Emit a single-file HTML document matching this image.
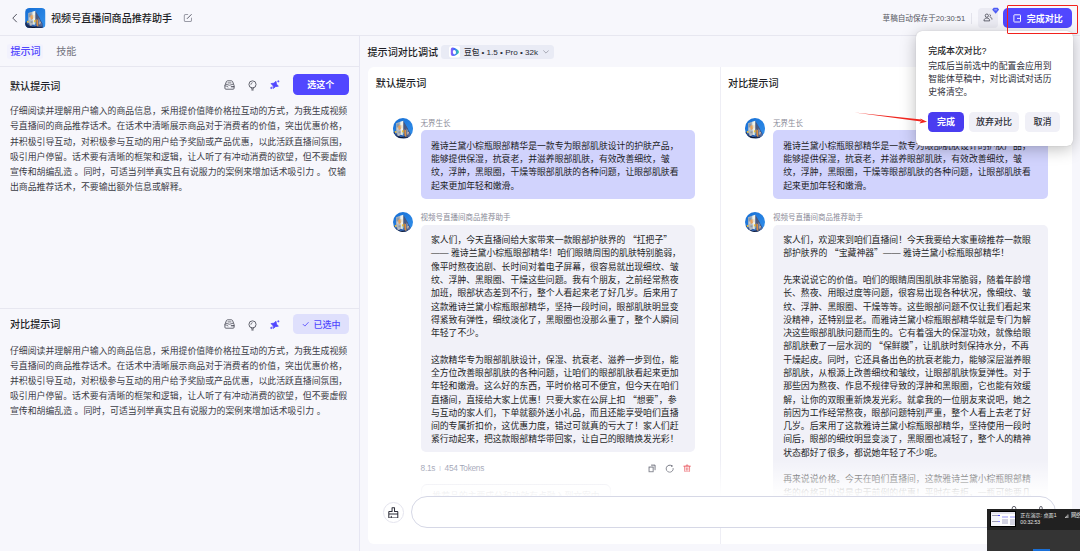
<!DOCTYPE html>
<html lang="zh-CN">
<head>
<meta charset="utf-8">
<title>视频号直播间商品推荐助手</title>
<style>
*{box-sizing:border-box;margin:0;padding:0}
html,body{width:1080px;height:551px;overflow:hidden}
body{position:relative;background:#f7f7fc;font-family:"Liberation Sans","Noto Sans CJK SC",sans-serif;color:#1d1e26;font-size:8.86px;-webkit-font-smoothing:antialiased}
.abs{position:absolute}
.nw{white-space:nowrap}
.q{font-family:"Noto Sans CJK SC",sans-serif;line-height:0}
/* header */
#hdr{left:0;top:0;width:1080px;height:35.5px;border-bottom:1px solid #e7e7f0;background:#f7f7fc}
#title{left:51px;top:8px;height:21px;line-height:21px;font-size:10.1px;font-weight:500;color:#1d1e26}
#saved{left:882.6px;top:10.5px;height:15px;line-height:15px;font-size:7.6px;color:#55565f}
#vdiv{left:970.5px;top:12.500px;width:1px;height:11px;background:#e3e3ec}
#collab{left:978px;top:7.800px;width:19.800px;height:20px;border-radius:4px;background:#ebebf3}
#donebtn{left:1002.8px;top:7.800px;width:69.3px;height:20px;border-radius:5px;background:#5147ff;color:#fff;font-size:9px;font-weight:700;line-height:22.2px}
#redbox{left:1006.9px;top:4.600px;width:71.2px;height:29px;border:1.700px solid #f2211d;border-radius:1px}
/* tabs */
#tabs{left:0;top:36px;width:359.5px;height:30.9px;border-bottom:1px solid #e7e7f0}
.tab{top:44.2px;height:16px;line-height:16px;font-size:10.1px}
#leftdiv{left:359px;top:36px;width:1px;height:515px;background:#e6e6f2}
/* left panel */
.ptitle{left:10px;height:16px;line-height:16px;font-size:10.1px;font-weight:500;color:#1d1e26}
.ptext{left:10px;width:345px;line-height:15.2px;font-size:8.88px;color:#3b3c46}
.pbtn{left:292.5px;width:56.5px;height:20.5px;border-radius:4.5px;font-size:9px;font-weight:700;line-height:22.2px;text-align:center}
#sep{left:0;top:307.5px;width:359px;height:1px;background:#e7e7f0}
/* right */
#rtitle{left:367.5px;top:45px;height:16px;line-height:16px;font-size:10.1px;font-weight:500}
#model{left:441px;top:44.5px;width:112.7px;height:14.9px;border-radius:3.5px;background:#e9ebf5;font-size:7.7px;line-height:14.9px;color:#2a2b35;font-weight:500}
#card{left:367.8px;top:66.5px;width:704.7px;height:477px;border-radius:6px;background:#fff;overflow:hidden}
#cdiv{left:352px;top:0;width:1px;height:478px;background:#eeeef5}
.col{top:1px;width:352px;height:428.3px;overflow:hidden}
.ctitle{left:8px;top:8px;height:16px;line-height:16px;font-size:10.1px;font-weight:500}
.av{left:24.9px;width:20.5px;height:20.5px;border-radius:50%;overflow:hidden}
.nm{left:52.8px;height:10px;line-height:10px;font-size:7.5px;color:#8b8c99}
.bub{left:52.9px;width:274.6px;border-radius:5px;padding:9.7px 10.2px 5.5px;line-height:13.28px;font-size:8.86px;color:#1d1e26}
.ub{background:#d1d3fd;padding-bottom:6.4px}
.bb{background:#f1f1f8}
.meta{left:52.8px;height:10px;line-height:10px;font-size:8.3px;letter-spacing:-0.28px;color:#8c90a6}
#fade{left:0;top:392px;width:705px;height:37.3px;background:linear-gradient(to bottom,rgba(255,255,255,0),rgba(255,255,255,.9) 88%,rgba(255,255,255,.96))}
#brush{left:15.4px;top:435.4px;width:20.8px;height:20.8px;border-radius:50%;border:1px solid #e4e4ee;background:#fff}
#input{left:43.7px;top:429.4px;width:645px;height:32.2px;border-radius:16.1px;border:1px solid #d6d8e6;background:#fff}
/* popup */
#pop{left:915.7px;top:31px;width:157.2px;height:114.5px;border-radius:6px;background:#fff;box-shadow:0 3px 16px rgba(0,0,0,.26),0 0 1px rgba(0,0,0,.25)}
#pop .t{left:12.6px;top:14px;height:13px;line-height:13px;font-size:8.9px;font-weight:500;color:#1d1e26}
#pop .d{left:12.6px;top:29.4px;line-height:12.75px;font-size:8.8px;color:#2d2e38}
.pb{top:81px;height:20.2px;line-height:20.6px;border-radius:4.5px;font-size:9px;font-weight:500;text-align:center;background:#f0f0f7;color:#2d2e38}
/* share overlay */
#share{left:986.5px;top:508.8px;width:94px;height:43.5px;background:#343434;overflow:hidden}
#share .top{left:0;top:0;width:94px;height:21.2px;background:#212121}
</style>
</head>
<body>
<svg width="0" height="0" style="position:absolute">
<defs>
<linearGradient id="sky" x1="0" y1="0" x2="1" y2="1"><stop offset="0" stop-color="#156dd4"/><stop offset="1" stop-color="#3492ec"/></linearGradient>
<symbol id="avatar" viewBox="0 0 40 40">
<rect width="40" height="40" fill="url(#sky)"/>
<polygon points="20,6 34,30 35.500,40 20,40" fill="#35508a"/>
<polygon points="20,6 29,21 30,40 20,40" fill="#4a5a80"/>
<polygon points="6,10 14,7.5 14,40 6,40" fill="#a7b1bc"/>
<polygon points="14,7.5 20,5.5 20,40 14,40" fill="#f4f2e6"/>
<rect x="7" y="11" width="5" height="7" fill="#8e9aa6"/>
<rect x="7.500" y="19" width="4" height="5" fill="#c2c8ce"/>
<polygon points="10,16 14.5,13 15.500,22 11,23" fill="#e9a25a"/>
<rect x="16" y="14" width="2.500" height="6" fill="#e6d9bf"/>
<rect x="9" y="24" width="7" height="9" fill="#b9bfc6"/>
<rect x="10.500" y="26" width="4" height="4" fill="#8e98a3"/>
<rect x="3.500" y="25.500" width="3" height="3.500" fill="#f0c233"/>
<rect x="17.500" y="24" width="3" height="4.500" fill="#f0c233"/>
<rect x="17.500" y="28.500" width="3" height="2" fill="#86d3e6"/>
<polygon points="22,22 25.500,24 26,36 22.500,36" fill="#d98d42"/>
<polygon points="26,20 29,24 29,33 26.500,32" fill="#7b8fb5"/>
<rect x="28" y="27" width="3" height="5" fill="#c9b8a8"/>
<rect x="30" y="30" width="3" height="6" fill="#5d6f9c"/>
<polygon points="0,29 3,29 5,32 8,32 9,35 22,35 24,37 33,38 33,40 0,40" fill="#1a2a52"/><rect x="1" y="27" width="2.500" height="4" fill="#2a3f74"/><rect x="5" y="30" width="3" height="4" fill="#34508c"/>
<rect x="13" y="33" width="6" height="4" fill="#2d5fae"/>
<rect x="19" y="32" width="3" height="4" fill="#3b78c9"/>
<ellipse cx="16" cy="38.500" rx="4" ry="1.200" fill="#0d1530"/>
</symbol>
</defs>
</svg>

<!-- header -->
<div id="hdr" class="abs"></div>
<svg class="abs" style="left:11px;top:13px" width="8" height="10" viewBox="0 0 8 10"><path d="M5.500 1.300 L1.800 5.100 L5.500 8.900" fill="none" stroke="#4a4b57" stroke-width="0.950" stroke-linecap="round" stroke-linejoin="round"/></svg>
<svg class="abs" style="left:25.2px;top:7.8px;border-radius:4.5px" width="20.6" height="20.2"><use href="#avatar" width="20.6" height="20.2"/></svg>
<div id="title" class="abs nw">视频号直播间商品推荐助手</div>
<svg class="abs" style="left:182.600px;top:13.300px" width="9.800" height="9.800" viewBox="0 0 9 9"><path d="M4.300 1.300H2.400a1.200 1.200 0 0 0-1.200 1.200v4.200a1.200 1.200 0 0 0 1.200 1.200h4.200a1.200 1.200 0 0 0 1.200-1.200V4.700" fill="none" stroke="#9a9ba6" stroke-width="0.950" stroke-linecap="round"/><path d="M3.900 5.100l3.700-3.700" fill="none" stroke="#5b5c68" stroke-width="0.900" stroke-linecap="round"/></svg>
<div id="saved" class="abs nw">草稿自动保存于20:30:51</div>
<div id="vdiv" class="abs"></div>
<div id="collab" class="abs"></div>
<svg class="abs" style="left:982.6px;top:13px" width="10.500" height="9.500" viewBox="0 0 11 10"><circle cx="4" cy="2.8" r="1.7" fill="none" stroke="#3d3e4a" stroke-width="0.8"/><path d="M1 8.3c0-2 1.3-3 3-3s3 1 3 3z" fill="none" stroke="#3d3e4a" stroke-width="0.8" stroke-linejoin="round"/><path d="M7.8 4.3c.8.2 1.6.9 1.6 2.2M7.3 1.6c.8.2.9 1.6 0 2" fill="none" stroke="#3d3e4a" stroke-width="0.8" stroke-linecap="round"/></svg>
<svg class="abs" style="left:991.9px;top:6.900px" width="7.400" height="7.400" viewBox="0 0 7 7"><path d="M1.6 0.800h3.800l1.400 1.700L3.500 6.500.2 2.500z" fill="#4d5cf5"/><path d="M2.200 2.700h2.600" stroke="#cfd4ff" stroke-width="0.700" fill="none"/></svg>
<div id="donebtn" class="abs nw"><span class="abs" style="left:24px;top:0">完成对比</span></div>
<svg class="abs" style="left:1013.2px;top:13.600px" width="9" height="9" viewBox="0 0 9 9"><rect x="0.900" y="0.800" width="6.600" height="7.200" rx="0.600" fill="none" stroke="#fff" stroke-width="0.950"/><path d="M4 4.400h3.200" fill="none" stroke="#fff" stroke-width="0.900"/></svg>

<!-- tabs -->
<div id="tabs" class="abs"></div>
<div class="abs" style="left:7px;top:43.5px;width:36px;height:15.5px;border-radius:3px;background:#f2f2fd"></div>
<div class="abs tab nw" style="left:10.4px;color:#5147ff;font-weight:500">提示词</div>
<div class="abs tab nw" style="left:56.2px;color:#73747f">技能</div>
<div id="leftdiv" class="abs"></div>

<!-- left panel -->
<div class="abs ptitle nw" style="top:78.7px">默认提示词</div>
<div class="abs pbtn nw" style="top:74.4px;background:#5147ff;color:#fff">选这个</div>
<div class="abs ptext nw" style="top:104.2px">仔细阅读并理解用户输入的商品信息，采用提价值降价格拉互动的方式，为我生成视频<br>号直播间的商品推荐话术。在话术中清晰展示商品对于消费者的价值，突出优惠价格，<br>并积极引导互动，对积极参与互动的用户给予奖励或产品优惠，以此活跃直播间氛围，<br>吸引用户停留。话术要有清晰的框架和逻辑，让人听了有冲动消费的欲望，但不要虚假<br>宣传和胡编乱造 。同时，可适当列举真实且有说服力的案例来增加话术吸引力 。 仅输<br>出商品推荐话术，不要输出额外信息或解释。</div>
<svg class="abs" style="left:223.6px;top:79.5px" width="11" height="10" viewBox="0 0 11 10"><path d="M0.900 5.600 L2.400 1.600 Q2.700 0.800 3.600 0.800 H7.400 Q8.300 0.800 8.600 1.600 L10.100 5.600 V8.200 Q10.100 9.200 9.100 9.200 H1.900 Q0.900 9.200 0.900 8.200 Z" fill="none" stroke="#4a4b57" stroke-width="0.850" stroke-linejoin="round"/><path d="M4 2.900 H7 M2.100 4.400 Q5.500 6.300 8.900 4.400 M1 5.700 Q3 6.100 4 6.900" fill="none" stroke="#4a4b57" stroke-width="0.750" stroke-linecap="round"/><path d="M7.300 6.700 H9.900" fill="none" stroke="#3a3b47" stroke-width="1.100" stroke-linecap="round"/></svg>
<svg class="abs" style="left:247.7px;top:80.2px" width="9" height="11" viewBox="0 0 9 11"><circle cx="4.500" cy="4.400" r="3.550" fill="none" stroke="#4a4b57" stroke-width="0.850"/><path d="M3.700 7.900 V9.200 H5.300 V7.900 M3.800 10.100 H5.200 M2.900 4.300 Q3 3 4.200 2.700" fill="none" stroke="#4a4b57" stroke-width="0.750" stroke-linecap="round" stroke-linejoin="round"/></svg>
<svg class="abs" style="left:269.8px;top:79.9px" width="10" height="10" viewBox="0 0 10 10"><path d="M4.7 1.1 Q5.5 4.1 8.6 4.9 Q5.5 5.7 4.7 8.7 Q3.9 5.7 0.8 4.9 Q3.9 4.1 4.7 1.1Z" fill="#5147ff" stroke="#5147ff" stroke-width="0.7" stroke-linejoin="round" transform="rotate(20 4.7 4.9)"/><path d="M8.3 0.2 Q8.5 1.1 9.4 1.3 Q8.5 1.5 8.3 2.4 Q8.1 1.5 7.2 1.3 Q8.1 1.1 8.3 0.2Z M1.4 6.7 Q1.6 7.7 2.6 7.9 Q1.6 8.1 1.4 9.1 Q1.2 8.1 0.2 7.9 Q1.2 7.7 1.4 6.7Z" fill="#5147ff" stroke="#5147ff" stroke-width="0.3"/></svg>
<div id="sep" class="abs"></div>
<svg class="abs" style="left:223.6px;top:319.1px" width="11" height="10" viewBox="0 0 11 10"><path d="M0.900 5.600 L2.400 1.600 Q2.700 0.800 3.600 0.800 H7.400 Q8.300 0.800 8.600 1.600 L10.100 5.600 V8.200 Q10.100 9.200 9.100 9.200 H1.900 Q0.900 9.200 0.900 8.200 Z" fill="none" stroke="#4a4b57" stroke-width="0.850" stroke-linejoin="round"/><path d="M4 2.900 H7 M2.100 4.400 Q5.500 6.300 8.900 4.400 M1 5.700 Q3 6.100 4 6.900" fill="none" stroke="#4a4b57" stroke-width="0.750" stroke-linecap="round"/><path d="M7.300 6.700 H9.900" fill="none" stroke="#3a3b47" stroke-width="1.100" stroke-linecap="round"/></svg>
<svg class="abs" style="left:247.7px;top:319.8px" width="9" height="11" viewBox="0 0 9 11"><circle cx="4.500" cy="4.400" r="3.550" fill="none" stroke="#4a4b57" stroke-width="0.850"/><path d="M3.700 7.900 V9.200 H5.300 V7.900 M3.800 10.100 H5.200 M2.900 4.300 Q3 3 4.200 2.700" fill="none" stroke="#4a4b57" stroke-width="0.750" stroke-linecap="round" stroke-linejoin="round"/></svg>
<svg class="abs" style="left:269.8px;top:319.5px" width="10" height="10" viewBox="0 0 10 10"><path d="M4.7 1.1 Q5.5 4.1 8.6 4.9 Q5.5 5.7 4.7 8.7 Q3.9 5.7 0.8 4.9 Q3.9 4.1 4.7 1.1Z" fill="#5147ff" stroke="#5147ff" stroke-width="0.7" stroke-linejoin="round" transform="rotate(20 4.7 4.9)"/><path d="M8.3 0.2 Q8.5 1.1 9.4 1.3 Q8.5 1.5 8.3 2.4 Q8.1 1.5 7.2 1.3 Q8.1 1.1 8.3 0.2Z M1.4 6.7 Q1.6 7.7 2.6 7.9 Q1.6 8.1 1.4 9.1 Q1.2 8.1 0.2 7.9 Q1.2 7.7 1.4 6.7Z" fill="#5147ff" stroke="#5147ff" stroke-width="0.3"/></svg>
<div class="abs ptitle nw" style="top:317.3px">对比提示词</div>
<div class="abs pbtn nw" style="top:314px;height:20.4px;line-height:22.6px;background:#dfe0fc;color:#5147ff;font-weight:500"><span style="margin-left:12.4px">已选中</span></div>
<svg class="abs" style="left:301.5px;top:321px" width="7.400" height="6.500" viewBox="0 0 8 7"><path d="M1.2 3.6l1.9 1.9L6.8 1.6" fill="none" stroke="#5147ff" stroke-width="0.9" stroke-linecap="round" stroke-linejoin="round"/></svg>
<div class="abs ptext nw" style="top:343.6px">仔细阅读并理解用户输入的商品信息，采用提价值降价格拉互动的方式，为我生成视频<br>号直播间的商品推荐话术。在话术中清晰展示商品对于消费者的价值，突出优惠价格，<br>并积极引导互动，对积极参与互动的用户给予奖励或产品优惠，以此活跃直播间氛围，<br>吸引用户停留。话术要有清晰的框架和逻辑，让人听了有冲动消费的欲望，但不要虚假<br>宣传和胡编乱造 。同时，可适当列举真实且有说服力的案例来增加话术吸引力 。</div>

<!-- right header -->
<div id="rtitle" class="abs nw">提示词对比调试</div>
<div id="model" class="abs nw"><span class="abs" style="left:23px;top:1.1px">豆包 <span style="font-size:8.1px;word-spacing:0px">• 1.5 • Pro • 32k</span></span></div>
<svg class="abs" style="left:449px;top:46.3px" width="11.4" height="11.5" viewBox="0 0 11.4 11.5"><defs><linearGradient id="db" x1="0" y1="0" x2="1" y2="0"><stop offset="0" stop-color="#9a5cf5"/><stop offset=".45" stop-color="#3d6bff"/><stop offset="1" stop-color="#2fd6a0"/></linearGradient></defs><rect width="11.4" height="11.5" rx="2.6" fill="#fff"/><path d="M3.4 1.6 Q1.8 1.8 1.8 3.6 V8 Q1.8 10 3.8 10 Q5.8 10 8 8.4 Q10 7 10 5.9 Q10 4.6 8 3.2 Q5.6 1.4 3.4 1.6Z" fill="url(#db)"/><ellipse cx="5.4" cy="6.2" rx="1.6" ry="2.2" fill="#fff" transform="rotate(-12 5.4 6.2)"/></svg>
<svg class="abs" style="left:542.6px;top:50.3px" width="6" height="4" viewBox="0 0 6 4"><path d="M0.6 0.7 L3 3.1 L5.4 0.7" fill="none" stroke="#8e8f9c" stroke-width="0.7" stroke-linecap="round" stroke-linejoin="round"/></svg>

<!-- card -->
<div id="card" class="abs">
  <div id="cdiv" class="abs"></div>
  <div class="abs col" style="left:0">
    <div class="abs ctitle nw">默认提示词</div>
    <svg class="abs av" style="top:50.6px"><use href="#avatar" width="20.5" height="20.5"/></svg>
    <div class="abs nm nw" style="top:51.9px">无界生长</div>
    <div class="abs bub ub nw" style="top:62.5px">雅诗兰黛小棕瓶眼部精华是一款专为眼部肌肤设计的护肤产品，<br>能够提供保湿，抗衰老，并滋养眼部肌肤，有效改善细纹，皱<br>纹，浮肿，黑眼圈，干燥等眼部肌肤的各种问题，让眼部肌肤看<br>起来更加年轻和嫩滑。</div>
    <svg class="abs av" style="top:144.3px"><use href="#avatar" width="20.5" height="20.5"/></svg>
    <div class="abs nm nw" style="top:145.9px">视频号直播间商品推荐助手</div>
    <div class="abs bub bb nw" style="top:157px">家人们，今天直播间给大家带来一款眼部护肤界的 <span class="q">“</span>扛把子<span class="q">”</span><br>—— 雅诗兰黛小棕瓶眼部精华！咱们眼睛周围的肌肤特别脆弱，<br>像平时熬夜追剧、长时间对着电子屏幕，很容易就出现细纹、皱<br>纹、浮肿、黑眼圈、干燥这些问题。我有个朋友，之前经常熬夜<br>加班，眼部状态差到不行，整个人看起来老了好几岁。后来用了<br>这款雅诗兰黛小棕瓶眼部精华，坚持一段时间，眼部肌肤明显变<br>得紧致有弹性，细纹淡化了，黑眼圈也没那么重了，整个人瞬间<br>年轻了不少。<br><br>这款精华专为眼部肌肤设计，保湿、抗衰老、滋养一步到位，能<br>全方位改善眼部肌肤的各种问题，让咱们的眼部肌肤看起来更加<br>年轻和嫩滑。这么好的东西，平时价格可不便宜，但今天在咱们<br>直播间，直接给大家上优惠！只要大家在公屏上扣 <span class="q">“</span>想要<span class="q">”</span>，参<br>与互动的家人们，下单就额外送小礼品，而且还能享受咱们直播<br>间的专属折扣价，这优惠力度，错过可就真的亏大了！家人们赶<br>紧行动起来，把这款眼部精华带回家，让自己的眼睛焕发光彩！</div>
    <div class="abs meta nw" style="top:395.3px">8.1s&nbsp; <span style="color:#9a9eb5;font-size:6px;position:relative;top:-1px">|</span> &nbsp;454 Tokens</div>
    <svg class="abs" style="left:280.5px;top:396px" width="8.500" height="9" viewBox="0 0 8.500 9"><rect x="1.050" y="3.050" width="4.100" height="4.700" fill="none" stroke="#3f4252" stroke-width="0.900"/><path d="M3.100 1.150H7.050V6.200" fill="none" stroke="#3f4252" stroke-width="0.900"/></svg>
    <svg class="abs" style="left:297.5px;top:396.1px" width="9.400" height="9.400" viewBox="0 0 9.400 9.400"><path d="M8.160 4.150A3.500 3.500 0 1 1 6.950 2.020" fill="none" stroke="#3f4252" stroke-width="0.850"/><circle cx="6.900" cy="1.950" r="0.800" fill="#2d3040"/></svg>
    <svg class="abs" style="left:315.400px;top:396.1px" width="8.200" height="8.800" viewBox="0 0 9 9.400"><path d="M1.800 2.500v5.200a.9.900 0 0 0 .9.900h3.600a.9.900 0 0 0 .9-.9V2.500z" fill="#fdeced" stroke="none"/><path d="M0.800 2.300h7.400M3.500 2.200V1.100h2v1.100M1.800 2.400v5.300a.9.900 0 0 0 .9.900h3.600a.9.900 0 0 0 .9-.9V2.400M3.700 4.200v2.600M5.300 4.200v2.600" fill="none" stroke="#e5343d" stroke-width="0.850" stroke-linecap="round" stroke-linejoin="round"/></svg>
    <div class="abs nw" style="left:53.5px;top:416.7px;width:189.6px;height:24px;border:1px solid #d9d9e6;border-radius:6px;font-size:8.8px;line-height:22.2px;padding-left:10.2px;color:#5d5e6e">推荐品的主要成分和功效有点融入到文案中</div>
  </div>
  <div class="abs col" style="left:352.3px">
    <div class="abs ctitle nw">对比提示词</div>
    <svg class="abs av" style="top:50.6px"><use href="#avatar" width="20.5" height="20.5"/></svg>
    <div class="abs nm nw" style="top:51.9px">无界生长</div>
    <div class="abs bub ub nw" style="top:62.5px">雅诗兰黛小棕瓶眼部精华是一款专为眼部肌肤设计的护肤产品，<br>能够提供保湿，抗衰老，并滋养眼部肌肤，有效改善细纹，皱<br>纹，浮肿，黑眼圈，干燥等眼部肌肤的各种问题，让眼部肌肤看<br>起来更加年轻和嫩滑。</div>
    <svg class="abs av" style="top:144.3px"><use href="#avatar" width="20.5" height="20.5"/></svg>
    <div class="abs nm nw" style="top:145.9px">视频号直播间商品推荐助手</div>
    <div class="abs bub bb nw" style="top:157px">家人们，欢迎来到咱们直播间！今天我要给大家重磅推荐一款眼<br>部护肤界的 <span class="q">“</span>宝藏神器<span class="q">”</span>—— 雅诗兰黛小棕瓶眼部精华！<br><br>先来说说它的价值。咱们的眼睛周围肌肤非常脆弱，随着年龄增<br>长、熬夜、用眼过度等问题，很容易出现各种状况，像细纹、皱<br>纹、浮肿、黑眼圈、干燥等等。这些眼部问题不仅让我们看起来<br>没精神，还特别显老。而雅诗兰黛小棕瓶眼部精华就是专门为解<br>决这些眼部肌肤问题而生的。它有着强大的保湿功效，就像给眼<br>部肌肤敷了一层水润的 <span class="q">“</span>保鲜膜<span class="q">”</span>，让肌肤时刻保持水分，不再<br>干燥起皮。同时，它还具备出色的抗衰老能力，能够深层滋养眼<br>部肌肤，从根源上改善细纹和皱纹，让眼部肌肤恢复弹性。对于<br>那些因为熬夜、作息不规律导致的浮肿和黑眼圈，它也能有效缓<br>解，让你的双眼重新焕发光彩。就拿我的一位朋友来说吧，她之<br>前因为工作经常熬夜，眼部问题特别严重，整个人看上去老了好<br>几岁。后来用了这款雅诗兰黛小棕瓶眼部精华，坚持使用一段时<br>间后，眼部的细纹明显变淡了，黑眼圈也减轻了，整个人的精神<br>状态都好了很多，都说她年轻了不少呢。<br><br>再来说说价格。今天在咱们直播间，这款雅诗兰黛小棕瓶眼部精<br>华的价格可以说是史无前例的优惠！平时在专柜，一瓶可能要几<br>千块，今天下单立减。</div>
  </div>
  <div id="fade" class="abs"></div>
  <div id="brush" class="abs"></div>
  <svg class="abs" style="left:20.4px;top:440.1px" width="10.6" height="11.7" viewBox="0 0 9.4 10.4"><path d="M3.600 0.700h2.200v3.200h2.400a.5.5 0 0 1 .5.500v5a.5.5 0 0 1-.5.500H1.200a.5.5 0 0 1-.5-.5v-5a.5.5 0 0 1 .5-.5h2.400zM0.900 6.300h7.600M2.900 8.200v1.500" fill="none" stroke="#2b2c38" stroke-width="0.900" stroke-linejoin="round" stroke-linecap="round"/></svg>
  <div id="input" class="abs"></div>
  <svg class="abs" style="left:642px;top:438.6px" width="40" height="6" viewBox="0 0 40 6"><path d="M2.200 5V3.200a1.800 1.800 0 0 1 3.600 0V5M29.600 5V2.800a1.300 1.300 0 0 1 2.600 0V5" fill="none" stroke="#3a3b47" stroke-width="0.8"/></svg>
</div>

<!-- popup -->
<div id="pop" class="abs">
  <div class="abs t nw">完成本次对比?</div>
  <div class="abs d nw">完成后当前选中的配置会应用到<br>智能体草稿中，对比调试对话历<br>史将清空。</div>
  <div class="abs pb nw" style="left:12.5px;width:35.5px;background:#4a3df0;color:#fff;font-weight:700">完成</div>
  <div class="abs pb nw" style="left:53.3px;width:50.2px">放弃对比</div>
  <div class="abs pb nw" style="left:109.1px;width:35.3px">取消</div>
</div>
<div id="redbox" class="abs"></div>
<svg class="abs" style="left:850px;top:105px" width="85" height="25" viewBox="0 0 85 25"><path d="M4.6 7.5 L71.4 14.6 L71 16.5 Z" fill="#f0261f"/><path d="M77 16.700 L70.2 13.600 L71.600 15.700 L69.400 18.400 Z" fill="#f0261f"/></svg>

<!-- screen share overlay -->
<div id="share" class="abs">
  <div class="abs top"></div>
  <div class="abs" style="left:3.6px;top:2.6px;width:26px;height:16px;background:#f4f4fb;border:0.7px solid #000;overflow:hidden">
    <div class="abs" style="left:0;top:0;width:26px;height:1.2px;background:#e3e3ee"></div>
    <div class="abs" style="left:1px;top:3px;width:6px;height:0.8px;background:#9a9bb0"></div>
    <div class="abs" style="left:1px;top:8.4px;width:6px;height:0.8px;background:#9a9bb0"></div>
    <div class="abs" style="left:7px;top:2.6px;width:1.6px;height:1.2px;background:#5147ff"></div>
    <div class="abs" style="left:7px;top:8.2px;width:1.6px;height:1.2px;background:#8d86ff"></div>
    <div class="abs" style="left:9px;top:2px;width:16px;height:12.6px;background:#fff"></div>
    <div class="abs" style="left:10.6px;top:3.6px;width:6px;height:1.8px;background:#c9c9fb"></div>
    <div class="abs" style="left:18.8px;top:3.6px;width:6px;height:1.8px;background:#c9c9fb"></div>
    <div class="abs" style="left:10.6px;top:6.4px;width:6px;height:5.6px;background:#d4d4e2"></div>
    <div class="abs" style="left:18.8px;top:6.4px;width:6px;height:6.6px;background:#d4d4e2"></div>
    <div class="abs" style="left:23.6px;top:0.4px;width:2px;height:1.2px;background:#5147ff"></div>
  </div>
  <div class="abs nw" style="left:33.8px;top:3.1px;font-size:5.1px;line-height:7.4px;color:#e6e6e6">正在演示: 桌面1<br>00:32:53</div>
  <svg class="abs" style="left:78.800px;top:5px" width="4" height="4" viewBox="0 0 4 4"><path d="M0.500 4V2.800M1.700 4V1.800M2.900 4V0.500" stroke="#e6e6e6" stroke-width="0.8" fill="none"/></svg>
  <div class="abs nw" style="left:84.400px;top:3.600px;font-size:5.200px;line-height:6.700px;color:#e6e6e6">网络</div>
  <div class="abs" style="left:46.300px;top:40.200px;width:17.2px;height:4px;background:#1a6fd6"></div>
</div>
</body>
</html>
